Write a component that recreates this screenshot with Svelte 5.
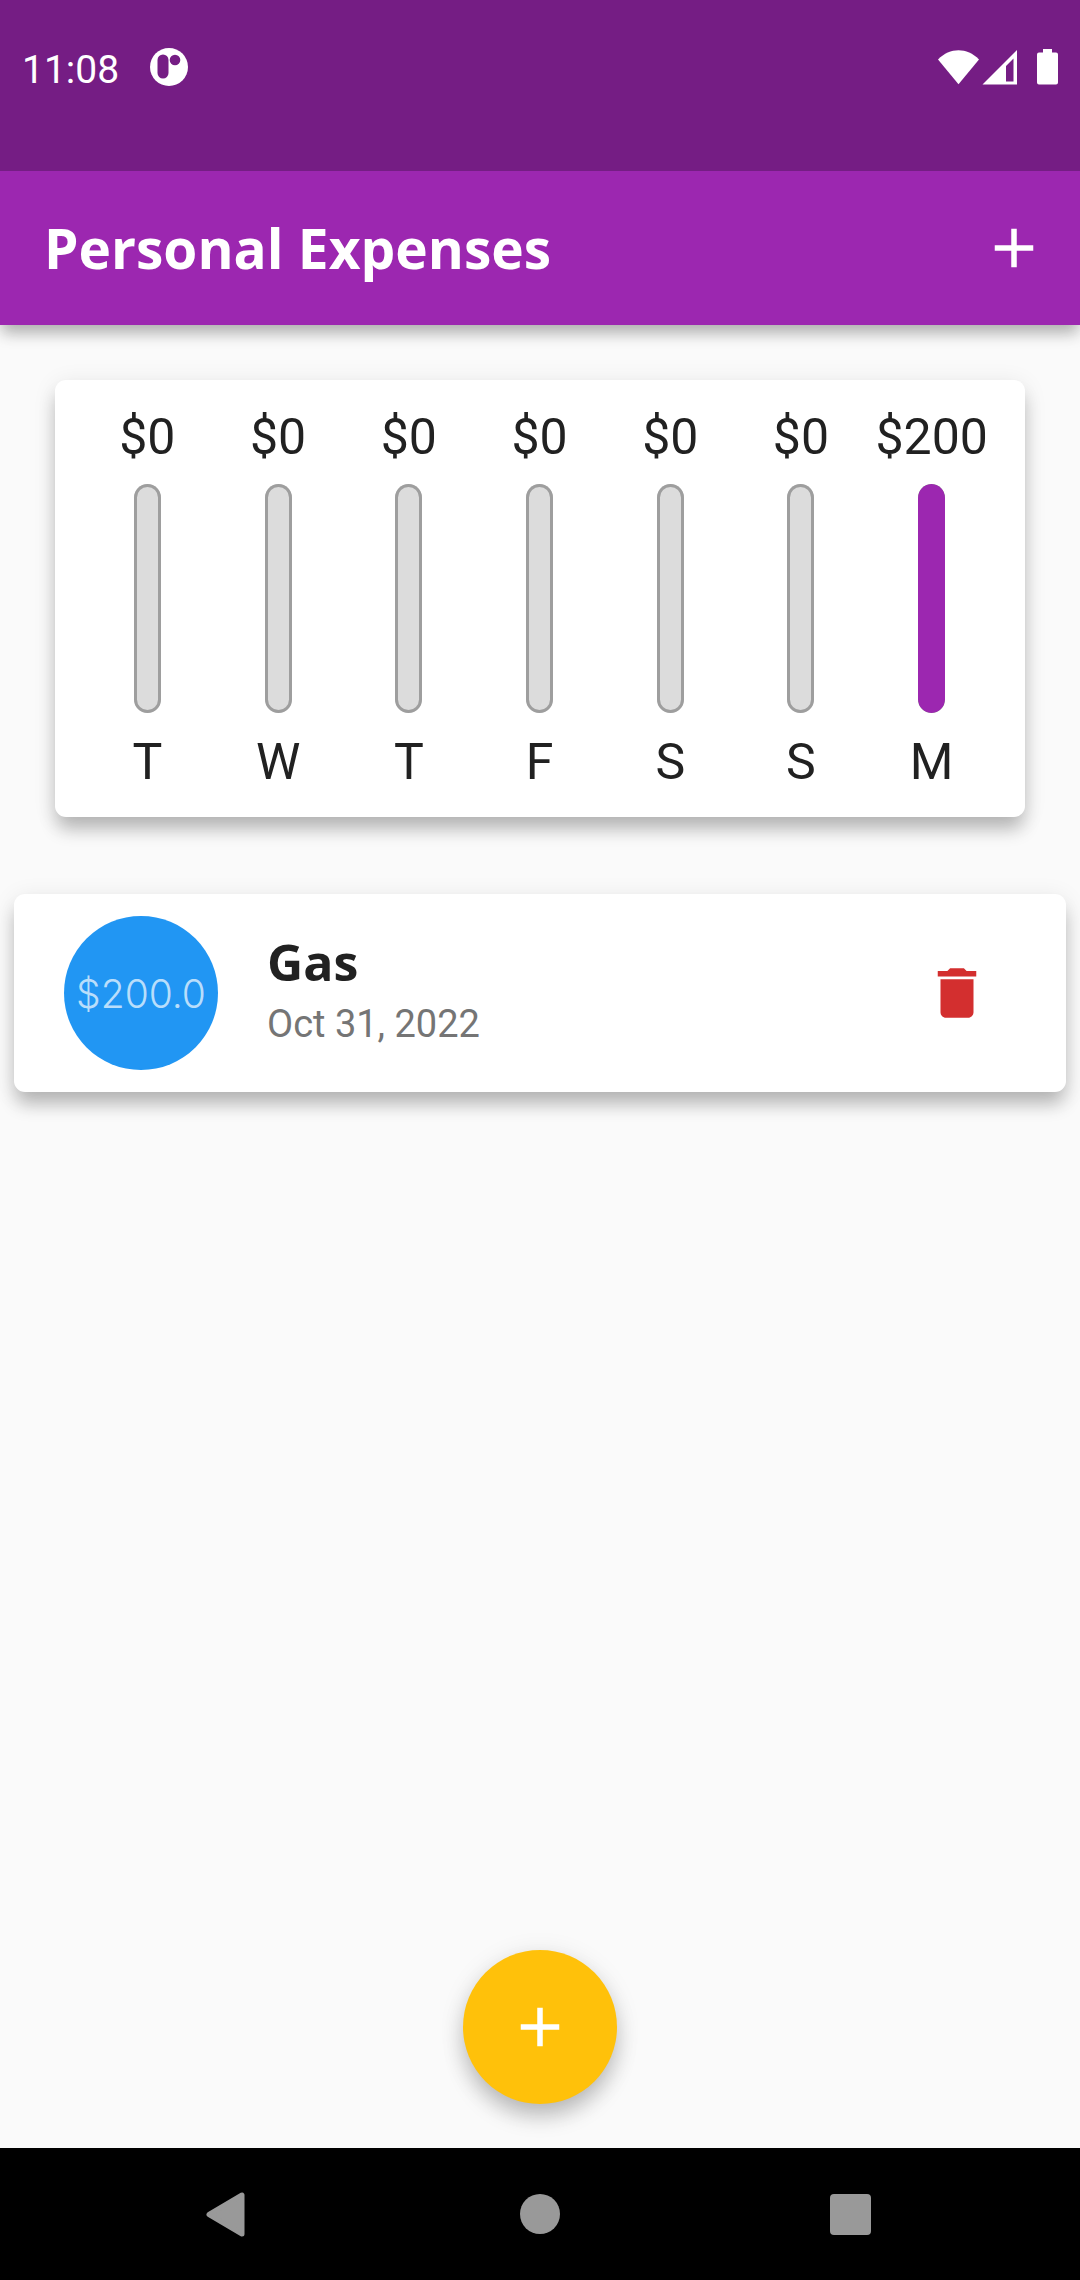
<script>
  const days = [
    { label: 'T', total: 0 },
    { label: 'W', total: 0 },
    { label: 'T', total: 0 },
    { label: 'F', total: 0 },
    { label: 'S', total: 0 },
    { label: 'S', total: 0 },
    { label: 'M', total: 200 }
  ];
  const weekTotal = days.reduce((sum, day) => sum + day.total, 0);

  let transactions = $state([
    { id: 1, title: 'Gas', amount: '$200.0', date: 'Oct 31, 2022' }
  ]);

  function remove(id) {
    transactions = transactions.filter((t) => t.id !== id);
  }
</script>

{#snippet plus()}
  <svg class="icon" viewBox="0 0 24 24" aria-hidden="true">
    <path d="M19 13h-6v6h-2v-6H5v-2h6V5h2v6h6v2z" />
  </svg>
{/snippet}

<div class="screen">
  <div class="status">
    <div class="status-side">
      <span class="clock">11:08</span>
      <svg width="38" height="38" viewBox="0 0 38 38" aria-hidden="true">
        <circle cx="19" cy="19" r="19" fill="#fff" />
        <rect x="7.500" y="6.500" width="11" height="24" rx="5.500" fill="#751d84" />
        <circle cx="25" cy="12" r="5.300" fill="#751d84" />
      </svg>
    </div>
    <div class="status-side">
      <svg width="120" height="36" viewBox="0 0 120 36" fill="#fff" aria-hidden="true">
        <path d="M0 10.500C12-1.700 29-1.700 41 10.500L20.500 35.300z" />
        <path fill-rule="evenodd" d="M44.500 35.500L79 1v34.500zM68 17v15.500h7.500V9.500z" />
        <path d="M105 0h9v3.500h4a2 2 0 0 1 2 2v28a2 2 0 0 1-2 2h-17a2 2 0 0 1-2-2v-28a2 2 0 0 1 2-2h4z" />
      </svg>
    </div>
  </div>

  <header class="appbar">
    <h1>Personal Expenses</h1>
    <button class="plain" aria-label="Add expense">{@render plus()}</button>
  </header>

  <main>
    <section class="card chart" aria-label="Spending this week">
      {#each days as day}
        <div class="day">
          <span class="label">${day.total}</span>
          <div class="track">
            <div class="fill" style="height: {(day.total / weekTotal) * 100}%"></div>
          </div>
          <span class="label">{day.label}</span>
        </div>
      {/each}
    </section>

    <ul>
      {#each transactions as t (t.id)}
        <li class="card tile">
          <span class="amount">{t.amount}</span>
          <div class="info">
            <h2>{t.title}</h2>
            <p>{t.date}</p>
          </div>
          <button class="plain delete" aria-label="Delete {t.title}" onclick={() => remove(t.id)}>
            <svg class="icon" viewBox="0 0 24 24" aria-hidden="true">
              <path d="M6 19c0 1.100.9 2 2 2h8c1.100 0 2-.9 2-2V7H6v12zM19 4h-3.500l-1-1h-5l-1 1H5v2h14V4z" />
            </svg>
          </button>
        </li>
      {/each}
    </ul>

    <button class="fab" aria-label="Add expense">{@render plus()}</button>
  </main>

  <nav>
    <button aria-label="Back">
      <svg width="46" height="46" viewBox="0 0 46 46" aria-hidden="true">
        <path d="M3 23.500L36 4v39z" stroke="#999" stroke-width="5" stroke-linejoin="round" />
      </svg>
    </button>
    <button aria-label="Home">
      <svg width="46" height="46" viewBox="0 0 46 46" aria-hidden="true"><circle cx="23" cy="23" r="20" /></svg>
    </button>
    <button aria-label="Recent apps">
      <svg width="46" height="46" viewBox="0 0 46 46" aria-hidden="true"><rect x="2" y="3" width="41" height="41" rx="4" /></svg>
    </button>
  </nav>
</div>

<style>
  :global(body) {
    margin: 0;
  }

  .screen {
    min-height: 100vh;
    display: flex;
    flex-direction: column;
    background: #fafafa;
    color: #212121;
    font-family: Roboto, 'Liberation Sans', sans-serif;
  }

  h1,
  h2,
  p,
  ul {
    margin: 0;
    padding: 0;
  }

  svg {
    display: block;
  }

  button {
    border: 0;
    padding: 0;
    background: none;
    cursor: pointer;
  }

  .icon {
    width: 66px;
    height: 66px;
    fill: currentColor;
  }

  .plain {
    color: #fff;
  }

  .status {
    position: relative;
    z-index: 1;
    box-sizing: border-box;
    height: 171px;
    padding: 43px 22px 0;
    display: flex;
    justify-content: space-between;
    align-items: flex-start;
    background: #751d84;
    color: #fff;
  }

  .status-side {
    height: 48px;
    display: flex;
    align-items: center;
    gap: 31px;
  }

  .clock {
    padding-top: 6px;
    font-size: 39px;
    line-height: 48px;
  }

  .appbar {
    height: 154px;
    padding: 0 33px 0 44px;
    display: flex;
    align-items: center;
    justify-content: space-between;
    background: #9c27b0;
    color: #fff;
    box-shadow: 0 10px 14px -2px rgba(0, 0, 0, 0.26), 0 4px 20px rgba(0, 0, 0, 0.08);
  }

  h1,
  h2 {
    font-family: 'Open Sans', 'Noto Sans', sans-serif;
    font-weight: 700;
  }

  h1 {
    font-size: 55px;
    line-height: 76px;
  }

  main {
    flex: 1;
    display: flex;
    flex-direction: column;
    padding: 55px 14px 44px;
  }

  .card {
    background: #fff;
    border-radius: 11px;
    box-shadow: 0 14px 18px -2px rgba(0, 0, 0, 0.24), 0 4px 24px rgba(0, 0, 0, 0.09);
  }

  .chart {
    display: flex;
    margin: 0 41px 77px;
    padding: 28px 28px 26px 27px;
  }

  .day {
    flex: 1 1 0;
    display: flex;
    flex-direction: column;
    align-items: center;
    gap: 18px;
  }

  .label {
    font-size: 50px;
    line-height: 58px;
  }

  .track {
    width: 27px;
    height: 229px;
    margin-bottom: 2px;
    display: flex;
    align-items: flex-end;
    overflow: hidden;
    border-radius: 14px;
    background: #dcdcdc;
    box-shadow: inset 0 0 0 3px #9e9e9e;
  }

  .fill {
    width: 100%;
    border-radius: 14px;
    background: #9c27b0;
  }

  ul {
    list-style: none;
  }

  .tile {
    display: flex;
    align-items: center;
    padding: 22px 76px 22px 50px;
  }

  .amount {
    width: 154px;
    height: 154px;
    display: flex;
    align-items: center;
    justify-content: center;
    border-radius: 50%;
    background: #2196f3;
    color: rgba(255, 255, 255, 0.7);
    font-family: Inter, sans-serif;
    font-size: 39px;
    font-weight: 300;
  }

  .info {
    flex: 1;
    margin-left: 49px;
  }

  h2 {
    font-size: 50px;
    line-height: 62px;
  }

  p {
    font-size: 38px;
    line-height: 62px;
    color: #757575;
  }

  .delete {
    color: #d32f2f;
  }

  .fab {
    width: 154px;
    height: 154px;
    margin: auto auto 0;
    display: flex;
    align-items: center;
    justify-content: center;
    border-radius: 50%;
    background: #ffc10a;
    color: #fff;
    box-shadow: 0 14px 22px -2px rgba(0, 0, 0, 0.22), 0 4px 26px rgba(0, 0, 0, 0.1);
  }

  nav {
    height: 132px;
    padding: 0 73px;
    display: flex;
    background: #000;
  }

  nav button {
    flex: 1;
    display: flex;
    align-items: center;
    justify-content: center;
    fill: #999;
  }
</style>
